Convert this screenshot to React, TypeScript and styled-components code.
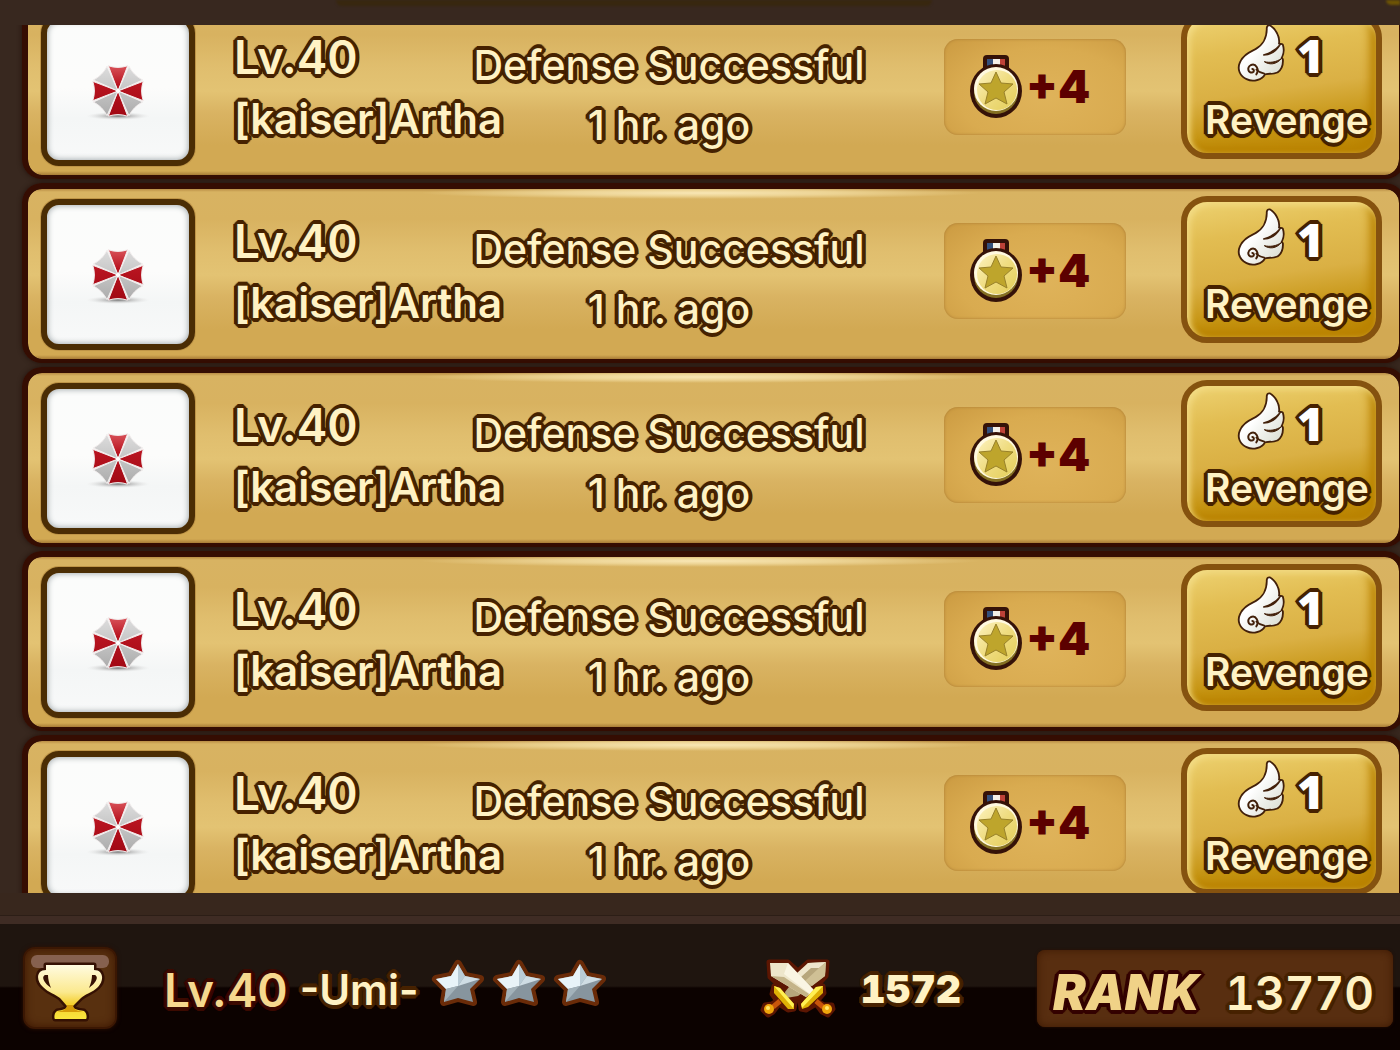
import React from "react";
import styled, { createGlobalStyle } from "styled-components";

const GlobalStyle = createGlobalStyle`
  *, *::before, *::after { box-sizing: border-box; }
  html, body { margin: 0; padding: 0; background: #38281f; }
  body { font-family: Inter, "Liberation Sans", sans-serif; }
`;

const Page = styled.div`
  display: flex;
  flex-direction: column;
  height: 100vh;
  min-height: 480px;
  overflow: hidden;
  background: #38281f;
`;

const TopEdge = styled.header`
  flex: none;
  display: flex;
  justify-content: space-between;
  height: 25px;
  padding-left: 24%;
  overflow: hidden;
`;

const TabEdge = styled.div`
  width: 56%;
  height: 6px;
  border-radius: 0 0 14px 14px;
  background: #38270f;
  filter: blur(1px);
`;

const CornerEdge = styled.div`
  width: 14px;
  height: 5px;
  border-radius: 0 0 0 14px;
  background: #6d5405;
  filter: blur(1px);
`;

const Log = styled.main`
  flex: 1;
  min-height: 0;
  overflow: hidden;
`;

const Rows = styled.ul`
  display: flex;
  flex-direction: column;
  gap: 4px;
  margin: -26px -5px 0 22px;
  padding: 0;
  list-style: none;
`;

const Row = styled.li`
  flex: none;
  display: flex;
  align-items: flex-start;
  height: 180px;
  padding: 0 17px 0 13px;
  border: 6px solid #350d02;
  border-width: 6px 6px 4px;
  border-radius: 20px;
  background:
    radial-gradient(ellipse 280px 6px at 49% 4px, #f8e6b4 0%, #ecd393 50%, transparent 100%),
    linear-gradient(#b98d45 0, #d8b362 3px, #d8b260 30px, #e0be6e 62px, #e3c373 86px, #d9b362 108px, #d2a953 140px, #d2a953 166px, #a87c36 100%);
  background-clip: padding-box;
  box-shadow: 0 0 5px #23120b;
`;

const Avatar = styled.div`
  flex: none;
  display: flex;
  align-items: center;
  justify-content: center;
  width: 154px;
  height: 151px;
  margin-top: 10px;
  border: 6px solid #4b2d04;
  border-radius: 18px;
  background: linear-gradient(#fbfcfb 0%, #fcfcfb 48%, #f4f6f6 70%, #f8f9f9 100%);
  box-shadow: inset 0 0 6px #8f989c, 0 0 0 1px #bf9547;
`;

const Player = styled.div`
  flex: none;
  width: 230px;
  margin: 21px 0 0 39px;
  white-space: nowrap;
`;

/* Rings of hard shadows give lettering an even, round-cornered outline. */
const outline = (color: string) =>
  [2, 3]
    .flatMap((radius) =>
      Array.from({ length: 16 }, (_, i) => {
        const a = (i * Math.PI) / 8;
        return `${(radius * Math.cos(a)).toFixed(1)}px ${(radius * Math.sin(a)).toFixed(1)}px 1px ${color}`;
      }),
    )
    .concat(`0 4px 0 ${color}`, `0 -4px 0 ${color}`, `4px 0 0 ${color}`, `-4px 0 0 ${color}`)
    .join(", ");

const Outlined = styled.span<{ $size: number; $weight?: number; $fill?: string; $edge?: string; $line?: number }>`
  display: block;
  font-size: ${(p) => p.$size}px;
  font-weight: ${(p) => p.$weight ?? 600};
  line-height: ${(p) => p.$line ?? 60}px;
  color: ${(p) => p.$fill ?? "#fff2c4"};
  text-shadow: ${(p) => outline(p.$edge ?? "#482503")};
  white-space: nowrap;
`;

const Figures = styled(Outlined)`
  font-variant-numeric: tabular-nums;
`;

const Outcome = styled.div`
  flex: 1;
  padding-top: 30px;
  text-align: center;
`;

const Reward = styled.div`
  flex: none;
  display: flex;
  align-items: center;
  width: 182px;
  height: 96px;
  margin: 34px 0 0 70px;
  padding-left: 26px;
  border-radius: 14px;
  background: radial-gradient(ellipse at 55% 60%, #dfb35a 0%, #d9ab50 60%, #cb9a41 100%);
  box-shadow: inset 0 0 3px #a97b32;
`;

const Points = styled.span`
  margin: 0 0 2px 2px;
  font: 900 46px/60px Inter, sans-serif;
  color: #5c0000;
`;

const RevengeButton = styled.button`
  flex: none;
  display: flex;
  flex-direction: column;
  align-items: center;
  width: 201px;
  height: 147px;
  margin: 7px 0 0 55px;
  padding: 4px 0 0 11px;
  border: 6px solid #85520f;
  border-radius: 26px;
  background: linear-gradient(172deg, #edd170 0%, #e2bd52 25%, #dab044 52%, #c4920f 78%, #b98200 100%);
  box-shadow: inset 3px 3px 6px #f3dc85, inset -6px -6px 10px #b98200;
  font-family: inherit;
  cursor: pointer;
`;

const Cost = styled.span`
  display: flex;
  align-items: center;
  gap: 11px;
  height: 68px;
  padding: 0 14px 6px 0;
`;

const CostNumber = styled(Outlined)`
  padding-top: 4px;
  font-family: "Open Sans", sans-serif;
`;

const Ledge = styled.div`
  flex: none;
  height: 31px;
  border-bottom: 8px solid #3f2c24;
  background: #38271d;
  box-shadow: inset 0 -1px #2c1e16;
`;

const Footer = styled.footer`
  flex: none;
  display: flex;
  align-items: center;
  height: 126px;
  padding: 2px 7px 0 23px;
  background: linear-gradient(#1f150f 0, #1f150f 62px, #0c0200 64px, #0c0200 100%);
`;

const TrophyButton = styled.button`
  flex: none;
  display: flex;
  justify-content: center;
  width: 94px;
  height: 82px;
  padding: 6px 0 0;
  border: 2px solid #3b1703;
  border-radius: 12px;
  background: #58300f;
  box-shadow: inset 0 0 8px #3c1602, 0 0 4px #2e0f02;
  cursor: pointer;
`;

const Profile = styled.div`
  display: flex;
  align-items: center;
  gap: 12px;
  margin: 4px 0 0 47px;
`;

const Stars = styled.div`
  display: flex;
  gap: 7px;
  margin: 0 0 9px 13px;
`;

const Battle = styled.div`
  display: flex;
  align-items: center;
  gap: 24px;
  margin-left: auto;
  padding-top: 2px;
`;

const RankPanel = styled.div`
  flex: none;
  display: flex;
  align-items: center;
  justify-content: space-between;
  width: 356px;
  height: 77px;
  margin-left: 76px;
  padding: 9px 19px 0 16px;
  border-radius: 8px;
  background: #582e10;
  box-shadow: inset 0 0 8px #3d1903, 0 0 3px #2b1004;
`;

const RankWord = styled(Outlined)`
  font-style: italic;
`;

function Umbrella() {
  const c = 32;
  const r = 27;
  const at = (deg: number, radius: number) => {
    const a = (deg * Math.PI) / 180;
    return `${(c + radius * Math.sin(a)).toFixed(2)} ${(c - radius * Math.cos(a)).toFixed(2)}`;
  };
  return (
    <svg width="64" height="64" viewBox="0 0 64 64" aria-label="Umbrella emblem">
      <defs>
        <linearGradient id="umRed" x1="0" y1="0" x2="0" y2="64" gradientUnits="userSpaceOnUse">
          <stop offset="0.1" stopColor="#d9535a" />
          <stop offset="0.4" stopColor="#b81420" />
          <stop offset="1" stopColor="#9c0611" />
        </linearGradient>
        <linearGradient id="umGrey" x1="0" y1="0" x2="0" y2="64" gradientUnits="userSpaceOnUse">
          <stop offset="0.1" stopColor="#dedede" />
          <stop offset="1" stopColor="#a4a4a4" />
        </linearGradient>
        <radialGradient id="umShade">
          <stop offset="0" stopColor="#777" />
          <stop offset="1" stopColor="#ddd" stopOpacity="0" />
        </radialGradient>
      </defs>
      <ellipse cx="32" cy="57" rx="32" ry="4" fill="url(#umShade)" />
      {Array.from({ length: 8 }, (_, i) => (
        <path
          key={i}
          d={`M${c} ${c} L${at(i * 45 - 21, r)} Q${at(i * 45, r - 5)} ${at(i * 45 + 21, r)} Z`}
          fill={i % 2 ? "url(#umGrey)" : "url(#umRed)"}
          stroke="#f3eeee"
          strokeWidth="1"
        />
      ))}
      <circle cx={c} cy={c} r="2" fill="#fff" />
    </svg>
  );
}

function Medal() {
  return (
    <svg width="54" height="64" viewBox="0 0 54 64" aria-hidden="true">
      <defs>
        <linearGradient id="mdFace" x1="0" y1="0" x2="1" y2="1">
          <stop offset="0" stopColor="#fdf3c0" />
          <stop offset="0.5" stopColor="#efdc80" />
          <stop offset="1" stopColor="#e3cd58" />
        </linearGradient>
      </defs>
      <rect x="13" y="0" width="26" height="22" rx="4" fill="#351208" />
      <rect x="17" y="4" width="6" height="9" fill="#34507c" />
      <rect x="23" y="4" width="7" height="9" fill="#f4f0e8" />
      <rect x="30" y="4" width="5" height="9" fill="#bd4238" />
      <ellipse cx="26" cy="36" rx="26" ry="27" fill="#351208" />
      <ellipse cx="26" cy="37" rx="22" ry="22" fill="#857022" />
      <ellipse cx="26" cy="34" rx="22" ry="22" fill="#fff9df" />
      <ellipse cx="27" cy="35" rx="20" ry="20" fill="url(#mdFace)" />
      <path
        d="M26 17 L31 28 43 29 34 37 37 49 26 43 15 49 18 37 9 29 21 28 Z"
        fill="#bea52c"
        stroke="#98812a"
        strokeWidth="1"
      />
    </svg>
  );
}

function Wing() {
  return (
    <svg width="50" height="60" viewBox="163 43 150 178" aria-hidden="true">
      <defs>
        <linearGradient id="wgFill" x1="0" y1="0" x2="1" y2="1">
          <stop offset="0.4" stopColor="#ffffff" />
          <stop offset="1" stopColor="#d4d8cc" />
        </linearGradient>
      </defs>
      <path
        d="M264 52 C276 58 294 82 289 106 L301 108 C306 124 303 136 297 147 L301 152 C302 170 296 181 286 188 C272 194 258 190 248 194 C240 210 214 217 196 208 C177 199 169 180 177 162 C186 140 205 132 224 122 C246 110 259 86 258 57 C259 52 261 51 264 52 Z"
        fill="url(#wgFill)"
        stroke="#42200a"
        strokeWidth="11"
        strokeLinejoin="round"
      />
      <path
        d="M264 52 C276 58 294 82 289 106 L301 108 C306 124 303 136 297 147 L301 152 C302 170 296 181 286 188 C272 194 258 190 248 194 C240 210 214 217 196 208 C177 199 169 180 177 162 C186 140 205 132 224 122 C246 110 259 86 258 57 C259 52 261 51 264 52 Z"
        fill="url(#wgFill)"
      />
      <path d="M296 106 C284 122 266 132 246 138 C266 138 282 130 296 106 Z" fill="#42200a" stroke="#42200a" strokeWidth="4" strokeLinejoin="round" />
      <path d="M300 148 C284 160 264 162 248 158 C262 168 284 168 300 148 Z" fill="#42200a" stroke="#42200a" strokeWidth="3" strokeLinejoin="round" />
      <path d="M248 194 C238 192 230 188 224 182" fill="none" stroke="#42200a" strokeWidth="5" strokeLinecap="round" />
      <path
        d="M224 196 C234 180 222 162 208 168 C194 176 200 194 213 190 C218 188 218 181 212 180"
        fill="none"
        stroke="#42200a"
        strokeWidth="6"
        strokeLinecap="round"
      />
    </svg>
  );
}

function Trophy() {
  return (
    <svg width="78" height="70" viewBox="-4 -8 78 70" aria-hidden="true">
      <defs>
        <linearGradient id="trGold" x1="0" y1="0" x2="0" y2="1">
          <stop offset="0" stopColor="#fffbe0" />
          <stop offset="0.5" stopColor="#fbe98f" />
          <stop offset="0.72" stopColor="#f4cf2f" />
          <stop offset="1" stopColor="#fbe63d" />
        </linearGradient>
      </defs>
      <rect x="-4" y="-8" width="78" height="13" rx="6" fill="#86614f" />
      <g stroke="#351103" strokeWidth="5" strokeLinejoin="round" paintOrder="stroke" fill="url(#trGold)">
        <path
          fillRule="evenodd"
          d="M11 2 H59 V7 C69 7 69 18 63 24 C57 30 50 31 46 35 L38 43 C38 46 42 47 49 48 C52 50 52 55 51 56 H20 C19 55 19 50 22 48 C28 47 32 46 32 43 L25 35 C20 31 14 30 8 24 C1 18 1 7 11 7 Z M10 12 C6 14 9 20 16 25 C14 20 13 16 13 12 Z M60 12 C64 14 61 20 54 25 C56 20 57 16 57 12 Z"
        />
      </g>
      <path d="M32 42 C32 46 28 48 22 49 H48 C42 48 38 46 38 42 Z" fill="#d79c08" />
    </svg>
  );
}

function Star() {
  return (
    <svg width="54" height="50" viewBox="0 0 54 50" aria-hidden="true">
      <path
        d="M27 5 L34 17 49 20 39 30 42 43 27 39 13 43 15 30 5 20 20 17 Z"
        fill="#7f8f99"
        stroke="#6a2b08"
        strokeWidth="8"
        strokeLinejoin="round"
      />
      <path d="M27 5 L34 17 49 20 39 30 42 43 27 39 13 43 15 30 5 20 20 17 Z" fill="#87959e" />
      <path d="M27 5 L27 27 15 30 5 20 20 17 Z" fill="#e8f3f8" />
      <path d="M27 5 L34 17 27 27 Z" fill="#b9cbd5" />
      <path d="M34 17 L49 20 27 27 Z" fill="#cfdde4" />
      <path d="M27 27 L15 30 13 43 Z" fill="#a3b2ba" />
    </svg>
  );
}

function Swords() {
  return (
    <svg width="76" height="62" viewBox="0 0 76 62" aria-hidden="true">
      <g fill="#5c1602" stroke="#5c1602" strokeWidth="5" strokeLinejoin="round">
        <path d="M9 4 L28 4 38 13 48 4 67 4 66 18 55 30 63 28 64 35 57 43 64 47 72 47 73 51 68 57 62 54 56 46 46 52 41 51 40 42 36 40 34 51 28 52 19 46 13 54 8 57 3 52 5 47 12 46 17 43 12 36 14 28 20 30 24 32 10 19 Z" />
      </g>
      <path d="M48 5 L66 4 65 18 38 38 26 40 25 34 Z" fill="#b7a67c" />
      <path d="M48 5 L66 4 59 10 51 10 41 19 37 15 Z" fill="#efe6cc" />
      <path d="M59 10 L66 4 65 18 52 28 45 23 Z" fill="#cfc095" />
      <path d="M10 5 L28 5 54 33 46 39 11 18 Z" fill="#eee6cb" />
      <path d="M11 18 L24 19 49 36 46 39 Z" fill="#c4b388" />
      <path d="M28 5 L55 33 50 36 24 16 Z" fill="#faf5e3" />
      <path d="M14 28 L20 30 34 46 34 51 28 51 14 35 Z" fill="#dfb006" />
      <path d="M14 28 L20 30 34 46 33 50 Z" fill="#fff052" />
      <path d="M63 28 L56 29 41 46 42 51 48 49 63 35 Z" fill="#dfb006" />
      <path d="M63 28 L56 29 41 46 42 50 Z" fill="#fff052" />
      <path d="M13 49 L20 43" stroke="#c8550b" strokeWidth="5" />
      <path d="M63 49 L56 43" stroke="#c8550b" strokeWidth="5" />
      <circle cx="9" cy="51" r="5" fill="#f0a50b" />
      <circle cx="67" cy="51" r="5" fill="#f0a50b" />
      <circle cx="8" cy="50" r="2" fill="#ffe96a" />
      <circle cx="67" cy="50" r="2" fill="#ffe96a" />
    </svg>
  );
}

const battles = Array.from({ length: 5 }, (_, id) => ({
  id,
  level: "Lv.40",
  name: "[kaiser]Artha",
  outcome: "Defense Successful",
  time: "1 hr. ago",
  points: "+4",
  cost: 1,
}));

export default function App() {
  return (
    <Page>
      <GlobalStyle />
      <TopEdge>
        <TabEdge />
        <CornerEdge />
      </TopEdge>
      <Log>
        <Rows>
          {battles.map((b) => (
            <Row key={b.id}>
              <Avatar>
                <Umbrella />
              </Avatar>
              <Player>
                <Outlined $size={46} $line={62}>{b.level}</Outlined>
                <Outlined $size={42} $line={62}>{b.name}</Outlined>
              </Player>
              <Outcome>
                <Outlined $size={41} $weight={500}>{b.outcome}</Outlined>
                <Outlined $size={41} $weight={500}>{b.time}</Outlined>
              </Outcome>
              <Reward>
                <Medal />
                <Points>{b.points}</Points>
              </Reward>
              <RevengeButton type="button">
                <Cost>
                  <Wing />
                  <CostNumber $size={46} $line={46} $weight={800} $fill="#ffffff">{b.cost}</CostNumber>
                </Cost>
                <Outlined $size={39}>Revenge</Outlined>
              </RevengeButton>
            </Row>
          ))}
        </Rows>
      </Log>
      <Ledge />
      <Footer>
        <TrophyButton type="button" aria-label="Ranking">
          <Trophy />
        </TrophyButton>
        <Profile>
          <Outlined $size={46} $weight={600} $fill="#f6d88e" $edge="#3c0a02">Lv.40</Outlined>
          <Outlined $size={42} $weight={600}>-Umi-</Outlined>
        </Profile>
        <Stars>
          <Star />
          <Star />
          <Star />
        </Stars>
        <Battle>
          <Swords />
          <Figures $size={39} $weight={900}>1572</Figures>
        </Battle>
        <RankPanel>
          <RankWord $size={49} $weight={900} $fill="#f0d287" $edge="#360502">RANK</RankWord>
          <Figures $size={46} $weight={600}>13770</Figures>
        </RankPanel>
      </Footer>
    </Page>
  );
}
